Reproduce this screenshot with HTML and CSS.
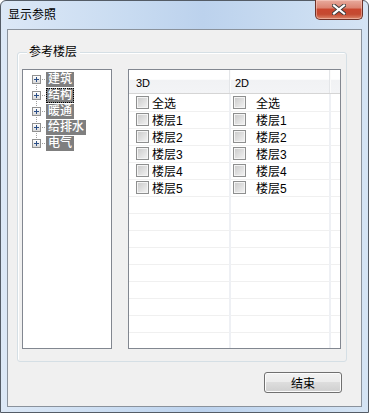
FILE: index.html
```html
<!DOCTYPE html>
<html lang="zh-CN">
<head>
    <meta charset="UTF-8">
    <title>显示参照</title>
    <link rel="stylesheet" href="styles.css">
</head>
<body>
    <div class="window">
        <div class="titlebar">
            <span class="title">显示参照</span>
            <button class="close-btn" title="关闭">
                <svg width="14" height="11" viewBox="0 0 14 11">
                    <path d="M2 1.5 L12 9.5 M12 1.5 L2 9.5" stroke="#3b3b3b" stroke-width="4" stroke-linecap="square"/>
                    <path d="M2 1.5 L12 9.5 M12 1.5 L2 9.5" stroke="#ffffff" stroke-width="2.2" stroke-linecap="square"/>
                </svg>
            </button>
        </div>

        <div class="client">
            <div class="group">
                <span class="group-title">参考楼层</span>

                <div class="panes">
                    <div class="tree">
                        <ul class="tree-list">
                            <li><span class="expander"></span><span class="connector"></span><span class="node selected">建筑</span></li>
                            <li><span class="expander"></span><span class="connector"></span><span class="node selected focused">结构</span></li>
                            <li><span class="expander"></span><span class="connector"></span><span class="node selected">暖通</span></li>
                            <li><span class="expander"></span><span class="connector"></span><span class="node selected">给排水</span></li>
                            <li><span class="expander"></span><span class="connector"></span><span class="node selected">电气</span></li>
                        </ul>
                    </div>

                    <div class="listview">
                        <div class="lv-header">
                            <div class="lv-col col-3d">3D</div>
                            <div class="lv-col col-2d">2D</div>
                            <div class="lv-col col-rest"></div>
                        </div>
                        <div class="lv-body">
                            <div class="lv-col col-3d">
                                <label class="row"><span class="check"></span>全选</label>
                                <label class="row"><span class="check"></span>楼层1</label>
                                <label class="row"><span class="check"></span>楼层2</label>
                                <label class="row"><span class="check"></span>楼层3</label>
                                <label class="row"><span class="check"></span>楼层4</label>
                                <label class="row"><span class="check"></span>楼层5</label>
                            </div>
                            <div class="lv-col col-2d">
                                <label class="row"><span class="check"></span>全选</label>
                                <label class="row"><span class="check"></span>楼层1</label>
                                <label class="row"><span class="check"></span>楼层2</label>
                                <label class="row"><span class="check"></span>楼层3</label>
                                <label class="row"><span class="check"></span>楼层4</label>
                                <label class="row"><span class="check"></span>楼层5</label>
                            </div>
                            <div class="lv-col col-rest"></div>
                        </div>
                    </div>
                </div>
            </div>

            <div class="footer">
                <button class="btn">结束</button>
            </div>
        </div>
    </div>
</body>
</html>
```

FILE: styles.css
```css
body {
    margin: 0;
    width: 369px;
    height: 413px;
    font-family: 'Liberation Sans', 'Noto Sans CJK SC', sans-serif;
    font-size: 12px;
    color: #000000;
    overflow: hidden;
}

.window {
    box-sizing: border-box;
    height: 413px;
    border: 1px solid #545c66;
    border-radius: 6px 6px 0 0;
    background: linear-gradient(to right, #dce8f6 0%, #c8dbf1 35%, #bcd2ed 55%, #c9dcf1 80%, #d5e4f4 100%);
    display: flex;
    flex-direction: column;
}

.titlebar {
    height: 28px;
    display: flex;
    align-items: flex-start;
    justify-content: space-between;
}

.title {
    padding: 6px 0 0 7px;
    line-height: 16px;
}

.close-btn {
    box-sizing: border-box;
    width: 48px;
    height: 20px;
    margin: -1px 5px 0 0;
    padding: 0;
    border: 1px solid #6e3228;
    border-top: none;
    border-radius: 0 0 5px 5px;
    background: linear-gradient(#e8ab9e 0%, #dc8573 40%, #c9472f 50%, #c44a31 75%, #dc876b 100%);
    box-shadow: inset 0 0 0 1px rgba(255, 220, 210, 0.45);
    display: flex;
    align-items: center;
    justify-content: center;
}

.close-btn svg {
    display: block;
}

.client {
    flex: 1;
    margin: 0 6px 5px 6px;
    border: 1px solid #8a929c;
    background-color: #f0f0f0;
    display: flex;
    flex-direction: column;
}

.group {
    height: 310px;
    box-sizing: border-box;
    margin: 22px 14px 0 9px;
    padding: 0 5px 12px 4px;
    border: 1px solid #d5dfe5;
    border-radius: 3px;
    box-shadow: inset 1px 1px 0 #ffffff;
    display: flex;
    flex-direction: column;
}

.group-title {
    align-self: flex-start;
    margin: -8px 0 0 5px;
    padding: 0 3px 0 2px;
    line-height: 14px;
    background-color: #f0f0f0;
}

.panes {
    flex: 1;
    margin-top: 10px;
    display: flex;
    gap: 16px;
}

/* tree view */

.tree {
    box-sizing: border-box;
    width: 90px;
    border: 1px solid #828790;
    background-color: #ffffff;
    padding-top: 1px;
}

.tree-list {
    list-style: none;
    margin: 0;
    padding: 0 0 0 9px;
    background-image: repeating-linear-gradient(#a0a0a0 0 1px, transparent 1px 2px);
    background-size: 1px 64px;
    background-position: 13px 8px;
    background-repeat: no-repeat;
}

.tree-list li {
    height: 16px;
    display: flex;
    align-items: center;
}

.expander {
    box-sizing: border-box;
    width: 9px;
    height: 9px;
    border: 1px solid #919191;
    background:
        linear-gradient(#2c4f86, #2c4f86) center / 5px 1px no-repeat,
        linear-gradient(#2c4f86, #2c4f86) center / 1px 5px no-repeat,
        linear-gradient(#ffffff, #d8d8d8);
}

.connector {
    width: 5px;
    height: 1px;
    background-image: repeating-linear-gradient(to right, transparent 0 1px, #a0a0a0 1px 2px);
}

.node {
    box-sizing: border-box;
    height: 15px;
    line-height: 15px;
    padding: 0 2px;
}

.node.selected {
    background-color: #7f7f7f;
    color: #ffffff;
    font-weight: 500;
}

.node.focused {
    outline: 1px dotted #000000;
    outline-offset: -1px;
}

/* list view */

.listview {
    box-sizing: border-box;
    width: 213px;
    border: 1px solid #828790;
    background-color: #ffffff;
    display: flex;
    flex-direction: column;
}

.lv-header {
    height: 23px;
    border-bottom: 1px solid #d5d5d5;
    background: linear-gradient(#ffffff 0%, #ffffff 40%, #f1f2f4 45%, #f3f4f6 100%);
    display: flex;
    font-size: 11px;
}

.lv-header .lv-col {
    line-height: 23px;
    padding-top: 2px;
    box-sizing: border-box;
}

.lv-header .col-3d {
    padding-left: 7px;
}

.lv-header .col-2d {
    padding-left: 5px;
}

.lv-col.col-3d {
    width: 100px;
    border-right: 2px solid #eef0f4;
}

.lv-col.col-2d {
    width: 98px;
    border-right: 2px solid #eef0f4;
}

.lv-header .lv-col.col-3d,
.lv-header .lv-col.col-2d {
    border-right: 1px solid #e3e5e8;
    box-shadow: 1px 0 0 #fbfbfb;
}

.lv-header .col-3d {
    width: 101px;
}

.lv-header .col-2d {
    width: 100px;
}

.lv-col.col-rest {
    flex: 1;
}

.lv-body {
    flex: 1;
    display: flex;
    background-image: repeating-linear-gradient(transparent 0 16px, #f0f0f0 16px 17px);
    background-position: 0 1px;
}

.row {
    height: 17px;
    display: flex;
    align-items: center;
}

.col-3d .row {
    padding-left: 7px;
    gap: 3px;
}

.col-2d .row {
    padding-left: 2px;
    gap: 10px;
}

.check {
    box-sizing: border-box;
    width: 13px;
    height: 13px;
    border: 1px solid #8e8f8f;
    background: linear-gradient(135deg, #c9c9c9 0%, #dedede 50%, #f4f4f4 100%);
    box-shadow: inset 0 0 0 1px #f4f4f4;
}

/* footer */

.footer {
    display: flex;
    justify-content: flex-end;
    padding: 10px 19px 0 0;
}

.btn {
    box-sizing: border-box;
    width: 78px;
    height: 21px;
    padding: 0;
    border: 1px solid #707070;
    border-radius: 3px;
    background: linear-gradient(#f2f2f2 0%, #ebebeb 50%, #dddddd 50%, #cfcfcf 100%);
    box-shadow: inset 0 0 0 1px #fbfbfb;
    font-family: inherit;
    font-size: 12px;
    color: #000000;
}
```
